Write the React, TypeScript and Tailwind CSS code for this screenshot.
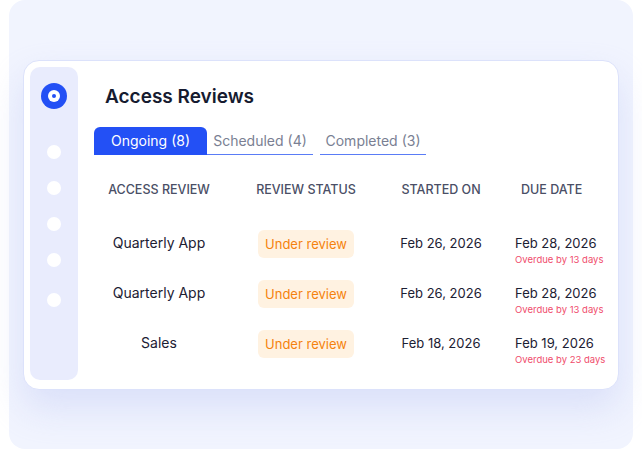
const rows = [
  { name: "Quarterly App", started: "Feb 26, 2026", due: "Feb 28, 2026", overdue: "Overdue by 13 days" },
  { name: "Quarterly App", started: "Feb 26, 2026", due: "Feb 28, 2026", overdue: "Overdue by 13 days" },
  { name: "Sales", started: "Feb 18, 2026", due: "Feb 19, 2026", overdue: "Overdue by 23 days" },
];

export default function App() {
  return (
    <div className="w-[642px] h-[450px] bg-white font-['Inter',sans-serif] text-[#1c2033]">
      <div className="ml-[9px] w-[624px] h-[449px] rounded-[16px] bg-[#f1f4fe] pt-[60px] px-[14px]">
        {/* Card */}
        <div className="flex h-[330px] rounded-[16px] border border-[#dce2fb] bg-white pt-[6px] pl-[6px] shadow-[0_18px_36px_rgba(190,200,245,0.45)]">
          {/* Sidebar */}
          <div className="flex h-[313px] w-[48px] flex-col items-center rounded-[10px] bg-[#e9ecfd] pt-[16px]">
            <div className="flex h-[26px] w-[26px] items-center justify-center rounded-full bg-[#2350f5]">
              <div className="flex h-[12px] w-[12px] items-center justify-center rounded-full bg-white">
                <div className="h-[4px] w-[4px] rounded-full bg-[#2350f5]" />
              </div>
            </div>
            <div className="mt-[36px] h-[14px] w-[14px] rounded-full bg-white" />
            <div className="mt-[22px] h-[14px] w-[14px] rounded-full bg-white" />
            <div className="mt-[22px] h-[14px] w-[14px] rounded-full bg-white" />
            <div className="mt-[22px] h-[14px] w-[14px] rounded-full bg-white" />
            <div className="mt-[26px] h-[14px] w-[14px] rounded-full bg-white" />
          </div>

          {/* Main */}
          <div className="flex-1 pl-[16px]">
            <h1 className="mt-[16px] ml-[11px] text-[19px] font-semibold leading-[28px] text-[#161b30]">
              Access Reviews
            </h1>

            {/* Tabs */}
            <div className="mt-[16px] flex items-end text-[14px] leading-[20px]">
              <div className="flex h-[28px] w-[113px] items-center justify-center rounded-t-[6px] bg-[#2350f5] text-white">
                Ongoing (8)
              </div>
              <div className="flex h-[28px] w-[106px] items-center justify-center border-b-[1.5px] border-[#5a7cf6] text-[#7a7f93]">
                Scheduled (4)
              </div>
              <div className="ml-[7px] flex h-[28px] w-[106px] items-center justify-center border-b-[1.5px] border-[#5a7cf6] text-[#7a7f93]">
                Completed (3)
              </div>
            </div>

            {/* Table header */}
            <div className="mt-[26px] grid grid-cols-[130px_164px_106px_1fr] text-[12.5px] font-medium leading-[18px] text-[#4a4f66]">
              <div className="text-center">ACCESS REVIEW</div>
              <div className="text-center">REVIEW STATUS</div>
              <div className="text-center">STARTED ON</div>
              <div className="pl-[27px]">DUE DATE</div>
            </div>

            {/* Rows */}
            <div className="mt-[33px] flex flex-col gap-[14px]">
              {rows.map((r, i) => (
                <div key={i} className="grid h-[36px] grid-cols-[130px_164px_106px_1fr] items-start text-[13px] leading-[20px]">
                  <div className="pt-[1px] text-center text-[14px]">{r.name}</div>
                  <div className="flex justify-center">
                    <span className="-mt-[2px] flex h-[28px] items-center rounded-[6px] bg-[#fff2e1] px-[7px] text-[#f5820d]">
                      Under review
                    </span>
                  </div>
                  <div className="pt-[1px] text-center">{r.started}</div>
                  <div className="pl-[21px]">
                    <div className="pt-[1px]">{r.due}</div>
                    <div className="text-[9.5px] leading-[14px] text-[#f04d6c]">{r.overdue}</div>
                  </div>
                </div>
              ))}
            </div>
          </div>
        </div>
      </div>
    </div>
  );
}
